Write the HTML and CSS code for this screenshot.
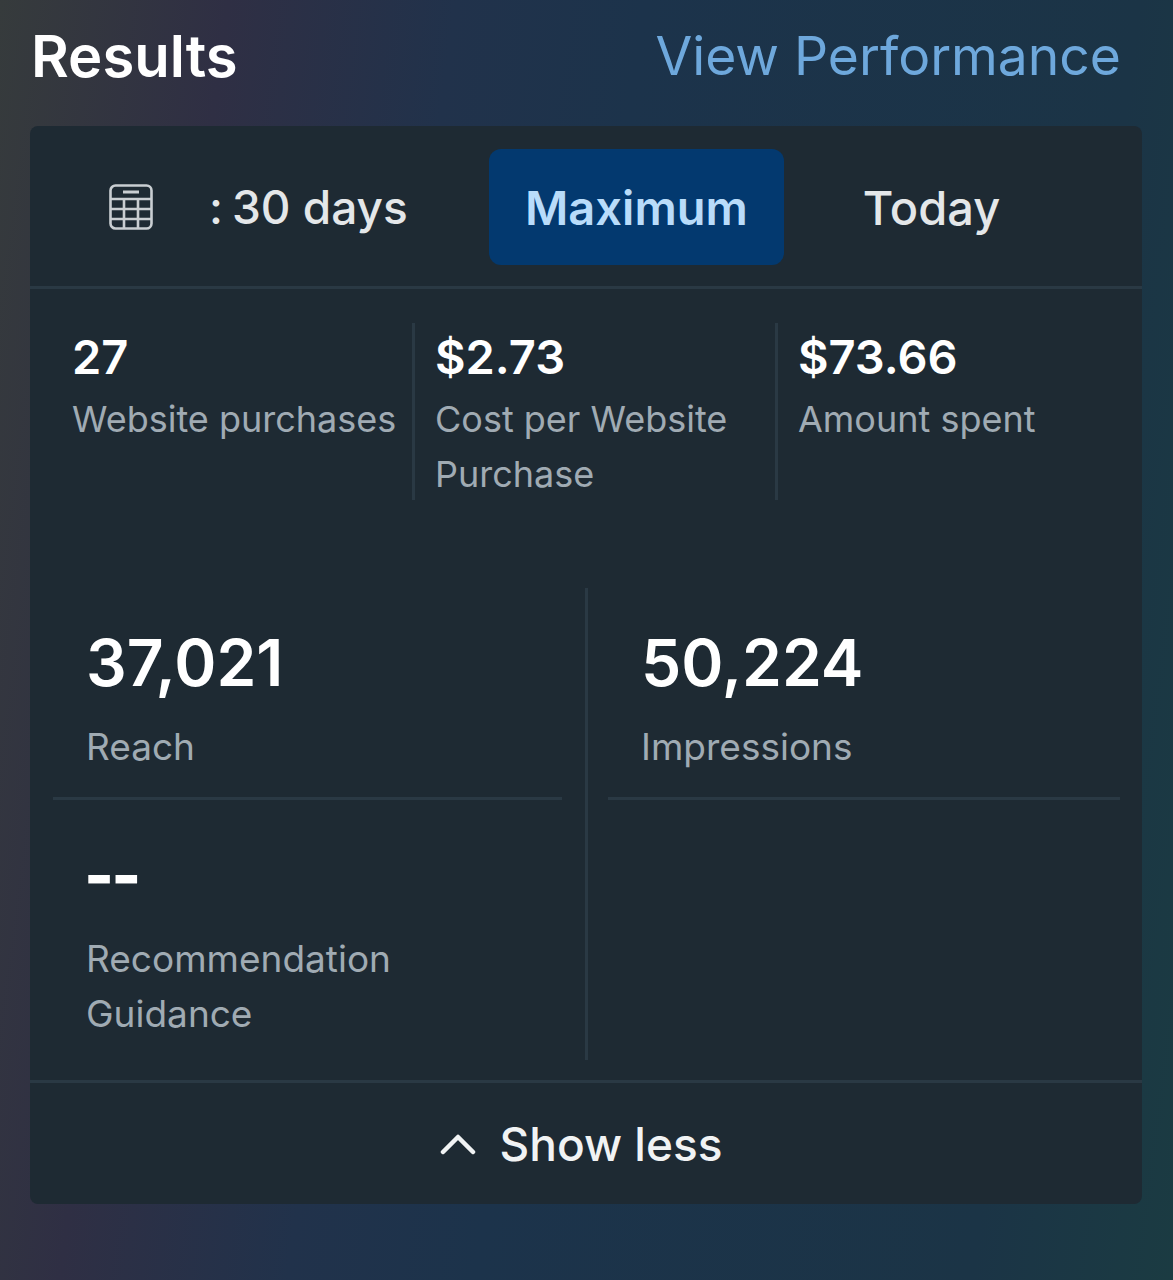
FILE: index.html
```html
<!DOCTYPE html>
<html lang="en">
<head>
    <meta charset="UTF-8">
    <meta name="viewport" content="width=device-width, initial-scale=1.0">
    <title>Results</title>
    <link rel="stylesheet" href="styles.css">
</head>
<body>
    <div class="header">
        <div class="title">Results</div>
        <div class="view-link">View Performance</div>
    </div>
    <div class="card">
        <div class="tabs">
            <div class="tab-range">
                <svg class="calendar" viewBox="0 0 44 46" fill="none" stroke="#c9ced2" stroke-width="2.6">
                    <rect x="1.5" y="1.5" width="41" height="43" rx="5"></rect>
                    <path d="M14 8h16" stroke-width="3"></path>
                    <path d="M2 15h40M2 25h40M2 35h40M15 15v30M29 15v30"></path>
                </svg>
                <span class="range-label"><span class="range-colon">:</span>30 days</span>
            </div>
            <div class="tab active">Maximum</div>
            <div class="tab">Today</div>
        </div>
        <div class="summary">
            <div class="summary-item">
                <div class="summary-value">27</div>
                <div class="summary-label">Website purchases</div>
            </div>
            <div class="summary-item">
                <div class="summary-value">$2.73</div>
                <div class="summary-label">Cost per Website Purchase</div>
            </div>
            <div class="summary-item">
                <div class="summary-value">$73.66</div>
                <div class="summary-label">Amount spent</div>
            </div>
        </div>
        <div class="details">
            <div class="details-col">
                <div class="metric metric-ruled">
                    <div class="metric-value">37,021</div>
                    <div class="metric-label">Reach</div>
                </div>
                <div class="metric">
                    <div class="metric-value metric-empty">--</div>
                    <div class="metric-label">Recommendation<br>Guidance</div>
                </div>
            </div>
            <div class="details-col">
                <div class="metric metric-ruled">
                    <div class="metric-value">50,224</div>
                    <div class="metric-label">Impressions</div>
                </div>
            </div>
        </div>
        <div class="footer">
            <svg class="chevron" viewBox="0 0 36 22" fill="none" stroke="#f1f3f4" stroke-width="4.5" stroke-linecap="round" stroke-linejoin="round">
                <path d="M3 19L18 4l15 15"></path>
            </svg>
            <span>Show less</span>
        </div>
    </div>
</body>
</html>
```

FILE: styles.css
```css
* {
    margin: 0;
    padding: 0;
    box-sizing: border-box;
    font-family: Inter, "Noto Sans", sans-serif;
}

body {
    width: 1173px;
    height: 1280px;
    padding: 0 31px 0 30px;
    overflow: hidden;
    background: linear-gradient(97.5deg, #363b3c 0%, #2f2f44 17%, #21324b 34%, #1c334b 48%, #1b3446 85%, #1b3b42 100%);
}

.header {
    height: 126px;
    padding: 0 21px 15px 1px;
    display: flex;
    justify-content: space-between;
    align-items: center;
}

.title {
    color: #fff;
    font-size: 58px;
    font-weight: 600;
}

.view-link {
    color: #6ea8dc;
    font-size: 53.4px;
}

.card {
    height: 1078px;
    background: #1e2a33;
    border-radius: 8px;
}

.tabs {
    height: 163px;
    padding: 23px 0 21px 79px;
    display: flex;
    align-items: center;
    border-bottom: 3px solid #2a3944;
}

.tab-range {
    width: 380px;
    display: flex;
    align-items: center;
    color: #e4e7e9;
}

.calendar {
    width: 44px;
    height: 46px;
    margin-right: 56px;
}

.range-label {
    font-size: 46px;
    font-weight: 500;
}

.range-colon {
    margin-right: 9px;
}

.tab {
    height: 116px;
    padding: 0 36px;
    display: flex;
    align-items: center;
    color: #e4e7e9;
    font-size: 47px;
    font-weight: 500;
    border-radius: 12px;
}

.tab.active {
    margin-right: 43px;
    background: #03396f;
    color: #b9dcfa;
    font-weight: 600;
}

.summary {
    padding: 34px 23px 0 22px;
    display: grid;
    grid-template-columns: 360px 363px 1fr;
}

.summary-item {
    height: 177px;
    padding-left: 20px;
    border-left: 3px solid #2a3944;
}

.summary-item:first-child {
    border-left: none;
}

.summary-value {
    margin-top: 3px;
    color: #fff;
    font-size: 47px;
    font-weight: 600;
    line-height: 62px;
}

.summary-label {
    margin-top: 4px;
    color: #a0abb3;
    font-size: 36px;
    line-height: 55px;
}

.details {
    margin-top: 88px;
    height: 472px;
    padding: 0 22px;
    display: grid;
    grid-template-columns: 533px 1fr;
}

.details-col {
    padding: 0 0 0 1px;
}

.details-col + .details-col {
    padding-left: 20px;
    border-left: 3px solid #2a3944;
}

.details-col:first-child {
    padding-right: 23px;
}

.metric {
    padding: 33px 0 0 33px;
}

.metric-ruled {
    height: 212px;
    border-bottom: 3px solid #2a3944;
}

.metric-value {
    color: #fff;
    font-size: 64px;
    font-weight: 600;
    line-height: 84px;
}

.metric-empty {
    font-weight: 800;
    letter-spacing: -3px;
    margin-left: -2px;
}

.metric-label {
    margin-top: 14px;
    color: #a0abb3;
    font-size: 37px;
    line-height: 55px;
}

.footer {
    margin-top: 20px;
    height: 125px;
    padding-right: 10px;
    display: flex;
    justify-content: center;
    align-items: center;
    gap: 24px;
    border-top: 3px solid #2a3944;
    color: #f1f3f4;
    font-size: 46px;
    font-weight: 500;
}

.chevron {
    width: 36px;
    height: 22px;
}
```
